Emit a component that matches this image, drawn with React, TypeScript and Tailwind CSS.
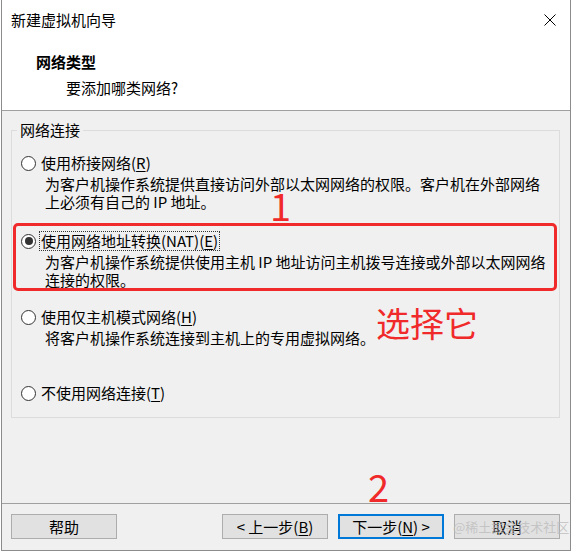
import React from "react";

const FONT = { fontFamily: '"Noto Sans CJK SC", "Liberation Sans", sans-serif' };

function Radio({ checked }: { checked?: boolean }) {
  return (
    <span className="flex h-[15px] w-[15px] shrink-0 items-center justify-center rounded-full border border-[#333333] bg-white">
      {checked && <span className="h-[8px] w-[8px] rounded-full bg-[#333333]" />}
    </span>
  );
}

function Option({
  label,
  hotkey,
  checked,
  desc,
  height,
}: {
  label: string;
  hotkey: string;
  checked?: boolean;
  desc?: React.ReactNode;
  height: string;
}) {
  return (
    <div className={height}>
      <div className="flex h-[18px] items-center pl-[9px]">
        <Radio checked={checked} />
        <span
          className={
            "ml-[4px] whitespace-nowrap px-px leading-[18px] " +
            (checked ? "outline outline-1 outline-dotted outline-[#333]" : "")
          }
        >
          {label}(<u className="underline-offset-2">{hotkey}</u>)
        </span>
      </div>
      {desc && <div className="ml-[33px] mt-[3px] whitespace-nowrap leading-[18px]">{desc}</div>}
    </div>
  );
}

function Button({ children, focused }: { children: React.ReactNode; focused?: boolean }) {
  return (
    <div
      className={
        "flex h-[25px] w-[106px] items-center justify-center bg-[#e1e1e1] leading-[18px] " +
        (focused ? "border-2 border-[#0078d7]" : "border border-[#adadad]")
      }
    >
      {children}
    </div>
  );
}

export default function App() {
  return (
    <div className="h-[552px] w-[572px] bg-white text-[15px] text-black" style={FONT}>
      <div className="relative ml-px h-[551px] w-[570px] border-x border-b border-[#8c8c8c] bg-[#f0f0f0]">
        {/* Header */}
        <div className="h-[111px] border-b border-[#a0a0a0] bg-white pt-[11px]">
          <div className="flex h-[18px] items-center justify-between pl-[9px] pr-[14px]">
            <span className="leading-[18px]">新建虚拟机向导</span>
            <svg width="12" height="12" viewBox="0 0 12 12">
              <path d="M0.5 0.5 L11.5 11.5 M11.5 0.5 L0.5 11.5" stroke="#000" strokeWidth="1" />
            </svg>
          </div>
          <div className="mt-[24px] pl-[34px] font-bold leading-[18px]">网络类型</div>
          <div className="mt-[8px] pl-[64px] leading-[18px]">要添加哪类网络?</div>
        </div>

        {/* Body */}
        <div className="h-[393px] border-b border-[#a0a0a0] pt-[10px]">
          <fieldset className="ml-[9px] h-[297px] w-[549px] border border-[#dcdcdc]">
            <legend className="ml-[5px] px-[3px] leading-[18px]">网络连接</legend>
            <div className="mt-[15px]">
              <Option
                height="h-[78px]"
                label="使用桥接网络"
                hotkey="R"
                desc={
                  <>
                    为客户机操作系统提供直接访问外部以太网网络的权限。客户机在外部网络
                    <br />
                    上必须有自己的 IP 地址。
                  </>
                }
              />
              <Option
                height="h-[76px]"
                label="使用网络地址转换(NAT)"
                hotkey="E"
                checked
                desc={
                  <>
                    为客户机操作系统提供使用主机 IP 地址访问主机拨号连接或外部以太网网络
                    <br />
                    连接的权限。
                  </>
                }
              />
              <Option
                height="h-[76px]"
                label="使用仅主机模式网络"
                hotkey="H"
                desc={<>将客户机操作系统连接到主机上的专用虚拟网络。</>}
              />
              <Option height="h-[18px]" label="不使用网络连接" hotkey="T" />
            </div>
          </fieldset>
        </div>

        {/* Buttons */}
        <div className="flex items-start justify-between pl-[9px] pr-[10px] pt-[10px]">
          <Button>帮助</Button>
          <div className="flex gap-[10px]">
            <Button>
              &lt; 上一步(<u className="underline-offset-2">B</u>)
            </Button>
            <Button focused>
              下一步(<u className="underline-offset-2">N</u>) &gt;
            </Button>
            <Button>取消</Button>
          </div>
        </div>

        {/* Annotations */}
        <div className="absolute left-[11px] top-[223px] h-[68px] w-[544px] rounded-[5px] border-[3px] border-[#f02a2a]" />
        <div className="absolute left-[268px] top-[195px] text-[38px] leading-[20px] text-[#f02a2a]">1</div>
        <div className="absolute left-[374px] top-[305px] text-[34px] leading-[36px] text-[#f02a2a]">选择它</div>
        <div className="absolute left-[366px] top-[466px] text-[38px] leading-[40px] text-[#f02a2a]">2</div>
        <div className="absolute left-[451px] top-[518px] text-[13px] leading-[18px] text-[#bdbdbd]/80">@稀土掘金技术社区</div>
      </div>
    </div>
  );
}
